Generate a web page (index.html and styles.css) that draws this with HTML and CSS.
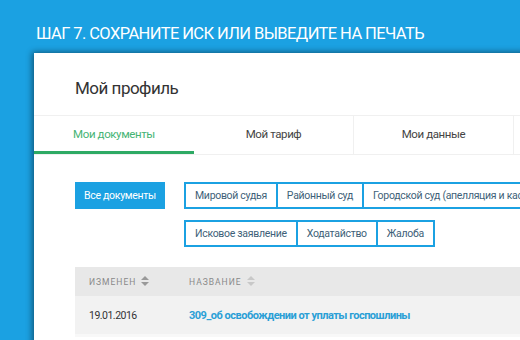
FILE: index.html
```html
<!DOCTYPE html>
<html lang="ru">
<head>
    <meta charset="UTF-8">
    <meta name="viewport" content="width=device-width, initial-scale=1.0">
    <title>Шаг 7</title>
    <link rel="stylesheet" href="styles.css">
</head>
<body>
    <h1 class="step-title">Шаг 7. Сохраните иск или выведите на печать</h1>

    <div class="panel">
        <h2 class="panel-title">Мой профиль</h2>

        <div class="tabs">
            <div class="tab active">Мои документы</div>
            <div class="tab">Мой тариф</div>
            <div class="tab">Мои данные</div>
            <div class="tab"></div>
        </div>

        <div class="filters">
            <button class="filter-all">Все документы</button>
            <div class="filter-groups">
                <div class="filter-row">
                    <button class="filter">Мировой судья</button>
                    <button class="filter">Районный суд</button>
                    <button class="filter">Городской суд (апелляция и кассация)</button>
                </div>
                <div class="filter-row">
                    <button class="filter">Исковое заявление</button>
                    <button class="filter">Ходатайство</button>
                    <button class="filter">Жалоба</button>
                </div>
            </div>
        </div>

        <table class="docs">
            <thead>
                <tr>
                    <th class="col-date">Изменен <span class="sort"></span></th>
                    <th>Название <span class="sort light"></span></th>
                </tr>
            </thead>
            <tbody>
                <tr>
                    <td>19.01.2016</td>
                    <td><a href="#">309_об освобождении от уплаты госпошлины</a></td>
                </tr>
            </tbody>
        </table>
    </div>
</body>
</html>
```

FILE: styles.css
```css
body {
    margin: 0;
    background-color: #1ba1e2;
    font-family: Roboto, "Liberation Sans", sans-serif;
    overflow: hidden;
    height: 340px;
}

.step-title {
    margin: 0;
    padding: 24px 0 0 36px;
    height: 30px;
    box-sizing: border-box;
    color: #fff;
    font-size: 16.5px;
    font-weight: normal;
    letter-spacing: -0.6px;
    text-transform: uppercase;
    line-height: 20px;
    white-space: nowrap;
}

.panel {
    margin-left: 34px;
    margin-top: 23px;
    width: 640px;
    height: 320px;
    background-color: #fff;
    box-shadow: -2px -1px 6px rgba(0, 0, 0, 0.45);
}

.panel-title {
    margin: 0;
    padding: 24px 0 0 41px;
    height: 62px;
    box-sizing: border-box;
    font-size: 17px;
    font-weight: normal;
    letter-spacing: -0.5px;
    color: #333;
    line-height: 22px;
}

.tabs {
    display: flex;
    border-top: 1px solid #f0f0f0;
    border-bottom: 1px solid #f0f0f0;
}

.tab {
    width: 160px;
    height: 38px;
    line-height: 36px;
    text-align: center;
    font-size: 11.5px;
    letter-spacing: -0.4px;
    color: #444;
    border-right: 1px solid #f0f0f0;
    box-sizing: border-box;
}

.tab.active {
    color: #45b474;
    border-bottom: 3px solid #2eaa64;
    border-right: none;
}

.filters {
    display: flex;
    gap: 19px;
    padding: 27px 0 0 41px;
}

.filter-all {
    width: 90px;
    height: 27px;
    border: none;
    background-color: #1ba1e2;
    color: #fff;
    font-family: inherit;
    font-size: 10.5px;
    letter-spacing: -0.3px;
    padding: 0;
}

.filter-groups {
    display: flex;
    flex-direction: column;
    gap: 11px;
}

.filter-row {
    display: flex;
}

.filter {
    height: 27px;
    padding: 0 9px;
    border: 2px solid #1ba1e2;
    margin-right: -2px;
    background-color: #fff;
    color: #3e5f78;
    font-family: inherit;
    font-size: 10.5px;
    letter-spacing: -0.3px;
    white-space: nowrap;
}

.docs {
    margin: 20px 0 0 41px;
    width: 560px;
    border-collapse: collapse;
}

.docs th {
    background-color: #e8e8e8;
    height: 29px;
    padding: 0 0 0 14px;
    text-align: left;
    font-size: 8.5px;
    font-weight: normal;
    letter-spacing: 1px;
    text-transform: uppercase;
    color: #888;
}

.docs th.col-date {
    width: 86px;
}

.docs td {
    background-color: #f2f2f2;
    height: 38px;
    padding: 0 0 0 14px;
    font-size: 10.5px;
    letter-spacing: -0.5px;
    color: #333;
    border-bottom: 3px solid #f8f8f8;
}

.docs a {
    color: #2a9fd6;
    font-size: 11px;
    font-weight: bold;
    letter-spacing: -0.5px;
    text-decoration: none;
}

.sort {
    display: inline-block;
    width: 0;
    height: 0;
    margin-left: 2px;
    position: relative;
    top: -5px;
    border-left: 4px solid transparent;
    border-right: 4px solid transparent;
    border-bottom: 4px solid #999;
}

.sort::after {
    content: "";
    position: absolute;
    left: -4px;
    top: 6px;
    border-left: 4px solid transparent;
    border-right: 4px solid transparent;
    border-top: 4px solid #999;
}

.sort.light,
.sort.light::after {
    border-bottom-color: #c8c8c8;
    border-top-color: #c8c8c8;
}
```
